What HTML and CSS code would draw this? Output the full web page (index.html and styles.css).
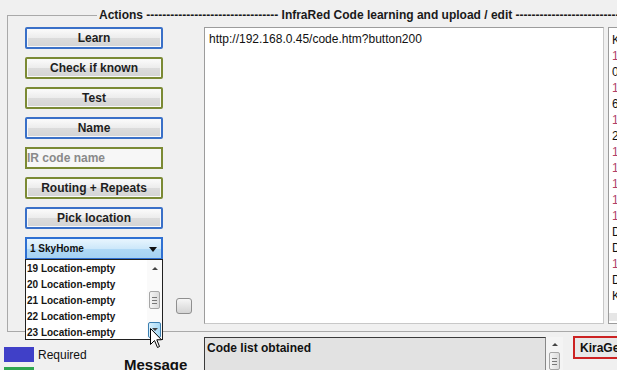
FILE: index.html
```html
<!DOCTYPE html>
<html lang="en">
<head>
    <meta charset="utf-8">
    <title>InfraRed Code learning</title>
    <link rel="stylesheet" href="styles.css">
</head>
<body>
    <fieldset class="group">
        <legend class="groupTitle">Actions --------------------------------- InfraRed Code learning and upload / edit ------------------------------</legend>
        <div class="groupBody">
            <div class="actions">
                <button class="btn blue">Learn</button>
                <button class="btn olive">Check if known</button>
                <button class="btn olive">Test</button>
                <button class="btn blue">Name</button>
                <input class="nameInput" type="text" placeholder="IR code name">
                <button class="btn olive">Routing + Repeats</button>
                <button class="btn blue">Pick location</button>
                <div class="select">
                    <span>1 SkyHome</span>
                    <span class="caret"></span>
                </div>
                <div class="dropList">
                    <ul class="rows">
                        <li>19 Location-empty</li>
                        <li>20 Location-empty</li>
                        <li>21 Location-empty</li>
                        <li>22 Location-empty</li>
                        <li>23 Location-empty</li>
                    </ul>
                    <div class="vscroll">
                        <span class="arrowUp"></span>
                        <span class="thumb"><i></i><i></i><i></i></span>
                        <span class="arrowDown hover"></span>
                    </div>
                </div>
            </div>
            <div class="toggleCol">
                <span class="toggle"></span>
            </div>
            <div class="editor">http://192.168.0.45/code.htm?button200</div>
            <div class="codes">
                <div class="codeLines">
                    <div>K0</div>
                    <div class="num">1</div>
                    <div>0</div>
                    <div class="num">1</div>
                    <div>6</div>
                    <div class="num">1</div>
                    <div>2</div>
                    <div class="num">1</div>
                    <div class="num">1</div>
                    <div class="num">1</div>
                    <div class="num">1</div>
                    <div class="num">1</div>
                    <div>D</div>
                    <div>D</div>
                    <div class="num">1</div>
                    <div>D</div>
                    <div>K1</div>
                </div>
                <div class="hscroll"><span></span></div>
            </div>
        </div>
    </fieldset>

    <div class="footer">
        <div class="keyCol">
            <div class="keyRow"><span class="swatch req"></span>Required</div>
            <div class="keyRow"><span class="swatch opt"></span>Optional</div>
        </div>
        <div class="messageTitle">Message</div>
        <div class="codeList">
            <div class="codeListText">Code list obtained</div>
            <div class="vscroll small">
                <span class="arrowUp"></span>
                <span class="thumb"><i></i><i></i><i></i></span>
            </div>
        </div>
        <div class="kira">KiraGet</div>
    </div>

    <svg class="cursor" width="13" height="21" viewBox="0 0 13 21">
        <path d="M0.5 0.5 L0.5 16.5 L4.5 12.5 L7.5 19.5 L9.5 18.5 L6.8 11.8 L11.5 11.8 Z" fill="#fff" stroke="#000" stroke-width="1"/>
    </svg>
</body>
</html>
```

FILE: styles.css
```css
html, body {
    margin: 0;
    padding: 0;
}
body {
    width: 617px;
    height: 370px;
    overflow: hidden;
    background-color: #f0f0f0;
    font-family: "Liberation Sans", Arial, sans-serif;
    font-size: 12px;
    color: #111;
    position: relative;
}

/* group box */
.group {
    margin: 8px 0 0 7px;
    padding: 5px 0 7px 17px;
    width: 680px;
    border: 1px solid #a9a9a9;
    box-sizing: border-box;
    min-width: 0;
}
.groupTitle {
    margin-left: 72px;
    padding: 0 2px;
    font-weight: bold;
    font-size: 12px;
    line-height: 14px;
    color: #1a1a1a;
    white-space: nowrap;
}
.groupBody {
    display: flex;
    height: 297px;
}

/* left column of actions */
.actions {
    width: 138px;
    display: flex;
    flex-direction: column;
    gap: 8px;
    flex-shrink: 0;
}
.actions > * {
    flex-shrink: 0;
}
.btn {
    height: 22px;
    margin: 0;
    padding: 0;
    border: 2px solid;
    border-radius: 2px;
    background: linear-gradient(#fbfbfb, #ececec 50%, #dcdcdc 51%, #d4d4d4);
    box-shadow: inset 0 0 0 1px #f8f8f8;
    font-family: inherit;
    font-weight: bold;
    font-size: 12px;
    color: #1e1e1e;
}
.blue {
    border-color: #3a70c8;
}
.olive {
    border-color: #7b8a34;
}
.nameInput {
    height: 22px;
    margin: 0;
    padding: 0;
    box-sizing: border-box;
    border: 2px solid #7b8a34;
    background: #f7f7f7;
    font-family: inherit;
    font-weight: bold;
    font-size: 12px;
    outline: none;
}
.nameInput::placeholder {
    color: #8a8a8a;
}
.select {
    height: 22px;
    box-sizing: border-box;
    border: 2px solid #2f70d2;
    border-bottom: 1px solid #2f70d2;
    background: linear-gradient(#e8f5fe, #cde8fa 50%, #b0d9f6 51%, #a6d2f3);
    display: flex;
    align-items: center;
    justify-content: space-between;
    padding: 0 4px 0 3px;
    font-weight: bold;
    font-size: 10px;
    color: #111;
}
.caret {
    width: 0;
    height: 0;
    border-left: 4px solid transparent;
    border-right: 4px solid transparent;
    border-top: 5px solid #111;
    margin-top: 2px;
}
.dropList {
    margin-top: -8px;
    height: 81px;
    box-sizing: border-box;
    border: 1px solid #202020;
    background: #fff;
    display: flex;
    position: relative;
    z-index: 1;
}
.rows {
    list-style: none;
    margin: 0;
    padding: 1px 0 0;
    flex: 1;
}
.rows li {
    height: 16px;
    line-height: 16px;
    padding-left: 1px;
    font-weight: bold;
    font-size: 10px;
    color: #151515;
}

/* scrollbars */
.vscroll {
    width: 15px;
    display: flex;
    flex-direction: column;
    align-items: center;
    background: #fafafa;
}
.arrowUp {
    width: 0;
    height: 0;
    margin-top: 7px;
    border-left: 3px solid transparent;
    border-right: 3px solid transparent;
    border-bottom: 3px solid #444;
}
.thumb {
    margin-top: 21px;
    width: 11px;
    height: 18px;
    box-sizing: border-box;
    border: 1px solid #a6a6a6;
    border-radius: 2px;
    background: linear-gradient(90deg, #f4f4f4, #dcdcdc);
    display: flex;
    flex-direction: column;
    align-items: center;
    justify-content: center;
    gap: 2px;
}
.thumb i {
    display: block;
    width: 5px;
    height: 1px;
    background: #777;
}
.arrowDown {
    margin-top: auto;
    margin-bottom: 1px;
    width: 13px;
    height: 16px;
    box-sizing: border-box;
    border: 1px solid #3c7fb1;
    border-radius: 2px;
    background: linear-gradient(90deg, #d9f0fc, #a7d9f5);
    position: relative;
}
.arrowDown::after {
    content: "";
    position: absolute;
    left: 3px;
    top: 5px;
    border-left: 3px solid transparent;
    border-right: 3px solid transparent;
    border-top: 3px solid #444;
}

.toggleCol {
    width: 41px;
    display: flex;
    justify-content: center;
    flex-shrink: 0;
}
.toggle {
    margin-top: 271px;
    width: 16px;
    height: 16px;
    box-sizing: border-box;
    border: 1px solid #8f8f8f;
    border-radius: 3px;
    background: linear-gradient(#f6f6f6, #d4d4d4);
}

.editor {
    width: 400px;
    flex-shrink: 0;
    box-sizing: border-box;
    border: 1px solid #9c9c9c;
    border-right-color: #c8c8c8;
    border-bottom-color: #c8c8c8;
    background: #fff;
    padding: 3px 4px;
    font-size: 12px;
    line-height: 16px;
    color: #111;
}
.codes {
    margin-left: 4px;
    width: 80px;
    flex-shrink: 0;
    box-sizing: border-box;
    border: 1px solid #9c9c9c;
    background: #fff;
    display: flex;
    flex-direction: column;
    overflow: hidden;
}
.codeLines {
    flex: 1;
    padding: 4px 0 0 3px;
    line-height: 16px;
    font-size: 12px;
    white-space: nowrap;
}
.codeLines .num {
    color: #b04068;
}
.hscroll {
    height: 8px;
    margin-bottom: 2px;
    background: #e6e6e6;
}

/* bottom strip */
.footer {
    display: flex;
    align-items: flex-start;
    height: 38px;
}
.footer > * {
    flex-shrink: 0;
}
.keyCol {
    width: 120px;
    margin-left: 4px;
    padding-top: 15px;
    display: flex;
    flex-direction: column;
    gap: 5px;
}
.keyRow {
    display: flex;
    align-items: center;
    gap: 4px;
    height: 15px;
    font-size: 12px;
}
.swatch {
    width: 30px;
    height: 15px;
}
.req {
    background: #4040c8;
}
.opt {
    background: #2fa650;
}
.messageTitle {
    width: 80px;
    padding-top: 24px;
    font-weight: bold;
    font-size: 15px;
    line-height: 18px;
}
.codeList {
    margin-top: 5px;
    width: 359px;
    height: 40px;
    display: flex;
}
.codeListText {
    flex: 1;
    box-sizing: border-box;
    border: 1px solid #3a3a3a;
    border-right-color: #888;
    background: #e2e2e2;
    padding: 3px 2px;
    font-weight: bold;
    font-size: 12px;
    line-height: 14px;
}
.vscroll.small {
    width: 17px;
    background: #f4f4f4;
}
.vscroll.small .arrowUp {
    margin-top: 6px;
}
.vscroll.small .thumb {
    margin-top: 6px;
}
.kira {
    margin-left: 10px;
    margin-top: 4px;
    height: 23px;
    width: 70px;
    box-sizing: border-box;
    border: 2px solid #cc2222;
    background: #e8e8e8;
    padding: 3px 0 0 5px;
    font-weight: bold;
    font-size: 12px;
    white-space: nowrap;
}

.cursor {
    position: absolute;
    left: 150px;
    top: 328px;
    z-index: 5;
}
```
